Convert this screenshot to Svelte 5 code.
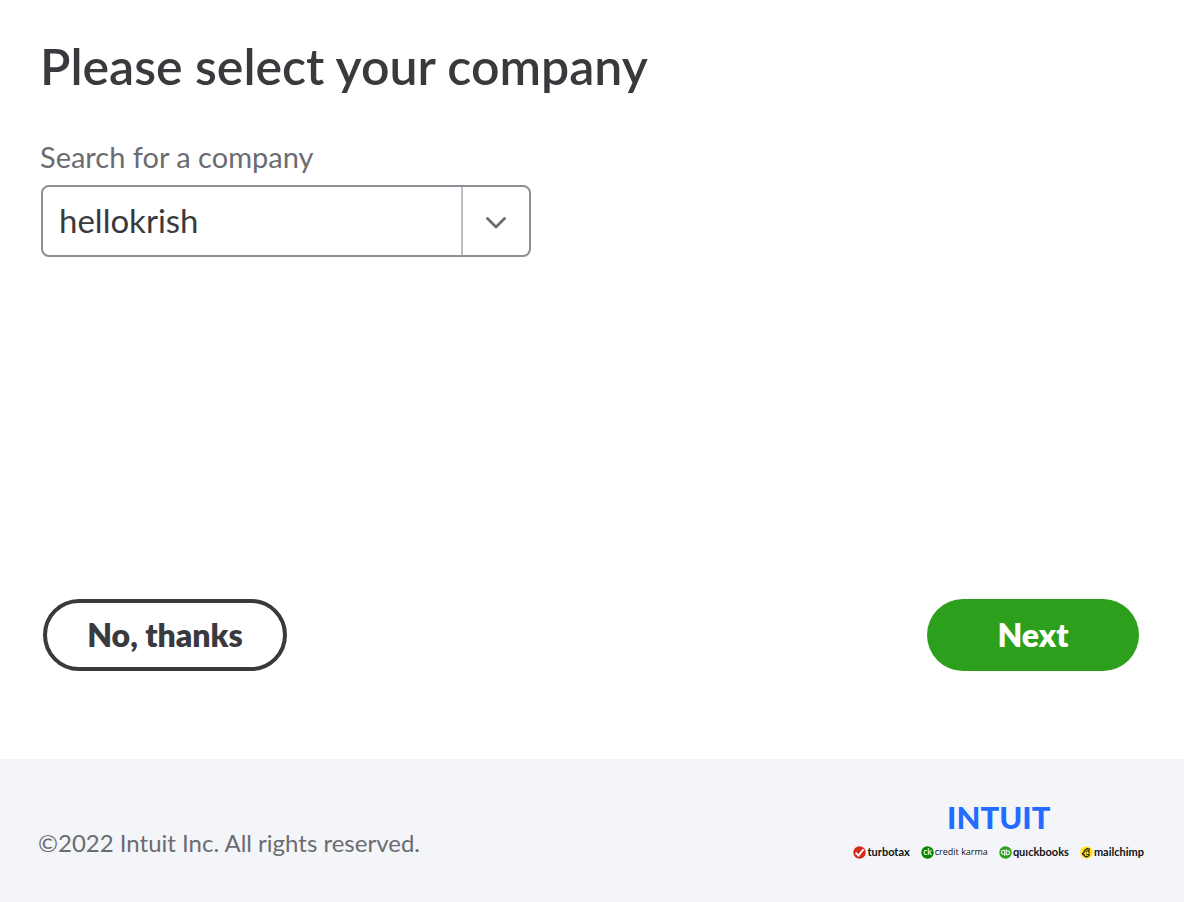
<script lang="ts">
  let company = "hellokrish";
  let open = false;

  const companies = ["hellokrish"];

  function pick(name: string) {
    company = name;
    open = false;
  }
</script>

<div class="page">
  <main>
    <h1>Please select your company</h1>

    <label for="company">Search for a company</label>
    <div class="combo">
      <input id="company" type="text" autocomplete="off" bind:value={company} />
      <button class="toggle" type="button" aria-label="Show companies" on:click={() => (open = !open)}>
        <svg width="20" height="12" viewBox="0 0 20 12" aria-hidden="true">
          <path d="M1.500 1.500 10 10l8.500-8.500" fill="none" stroke="#6b6c72" stroke-width="2.800" stroke-linecap="round" stroke-linejoin="round" />
        </svg>
      </button>
      {#if open}
        <ul class="options">
          {#each companies as name}
            <li><button type="button" on:click={() => pick(name)}>{name}</button></li>
          {/each}
        </ul>
      {/if}
    </div>

    <div class="actions">
      <button class="btn secondary" type="button">No, thanks</button>
      <button class="btn primary" type="button">Next</button>
    </div>
  </main>

  <footer>
    <p>©2022 Intuit Inc. All rights reserved.</p>

    <div class="brands">
      <div class="intuit">INTUIT</div>
      <div class="products">
        <span class="product">
          <svg width="13" height="13" viewBox="0 0 24 24" aria-hidden="true">
            <circle cx="12" cy="12" r="11.500" fill="#d52b1e" />
            <path d="M5 12.500l5 5L19.500 6" fill="none" stroke="#fff" stroke-width="3.500" />
          </svg>
          turbotax
        </span>
        <span class="product karma">
          <svg width="13" height="13" viewBox="0 0 24 24" aria-hidden="true">
            <circle cx="12" cy="12" r="11.500" fill="#008600" />
            <text x="12" y="17" text-anchor="middle" font-size="15" font-weight="600" fill="#fff">ck</text>
          </svg>
          credit karma
        </span>
        <span class="product">
          <svg width="13" height="13" viewBox="0 0 24 24" aria-hidden="true">
            <circle cx="12" cy="12" r="11.500" fill="#2ca01c" />
            <path d="M10.500 18V8H8a3.500 3.500 0 0 0 0 7h.8M13.500 6v10H16a3.500 3.500 0 0 0 0-7h-.8" fill="none" stroke="#fff" stroke-width="1.900" />
          </svg>
          quıckbooks
        </span>
        <span class="product">
          <svg width="13" height="13" viewBox="0 0 24 24" aria-hidden="true">
            <circle cx="12" cy="12" r="11.500" fill="#ffe01b" />
            <path d="M17 5.500C13 3.500 7.500 8 7 12.500c-3 0-3 4 .5 4 1 4.500 8.500 4.500 10-.5" fill="none" stroke="#241c15" stroke-width="2.400" />
            <path d="M17 5.500c1.500 1-1 2.500-1 4.500 0 1.500 1.500 2 1 3.500M10.500 11.500c1.500-2 3.500-3 5-2.500M11 14.500c2 1.500 4 1.500 6.500 1" fill="none" stroke="#241c15" stroke-width="2" />
          </svg>
          mailchimp
        </span>
      </div>
    </div>
  </footer>
</div>

<style>
  :global(body) {
    margin: 0;
    background: #fff;
  }

  .page {
    display: flex;
    flex-direction: column;
    min-height: 100vh;
    font-family: Lato, "Liberation Sans", sans-serif;
    color: #393a3d;
  }

  .page * {
    box-sizing: border-box;
  }

  main {
    flex: 1;
    display: flex;
    flex-direction: column;
    padding: 34px 40px 88px;
  }

  h1 {
    margin: 0 0 42px;
    font-size: 50px;
    line-height: 64px;
    font-weight: 600;
  }

  label {
    margin-bottom: 12px;
    font-size: 29px;
    line-height: 33px;
    color: #6b6c72;
  }

  /* Company picker */
  .combo {
    position: relative;
    display: flex;
    width: 100%;
    max-width: 490px;
    height: 72px;
    margin-left: 1px;
    border: 2px solid #8d9096;
    border-radius: 8px;
    background: #fff;
  }

  .combo input {
    flex: 1;
    min-width: 0;
    padding: 0 16px 2px;
    border: 0;
    outline: none;
    background: transparent;
    font: inherit;
    font-size: 33px;
    color: #393a3d;
  }

  .toggle {
    display: flex;
    align-items: center;
    justify-content: center;
    width: 68px;
    padding: 4px 0 0;
    border: 0;
    border-left: 2px solid #babec5;
    background: transparent;
    cursor: pointer;
  }

  .options {
    position: absolute;
    top: 100%;
    left: 0;
    right: 0;
    margin: 4px 0 0;
    padding: 8px 0;
    list-style: none;
    border: 2px solid #8d9096;
    border-radius: 8px;
    background: #fff;
  }

  .options button {
    width: 100%;
    padding: 8px 16px;
    border: 0;
    background: transparent;
    font: inherit;
    font-size: 29px;
    text-align: left;
  }

  /* Buttons */
  .actions {
    display: flex;
    justify-content: space-between;
    margin-top: auto;
    padding: 0 5px 0 3px;
  }

  .btn {
    height: 72px;
    padding: 0 32px 2px;
    border-radius: 36px;
    font: inherit;
    font-size: 32px;
    font-weight: 800;
    cursor: pointer;
  }

  .secondary {
    min-width: 244px;
    border: 4px solid #393a3d;
    background: #fff;
    color: #393a3d;
  }

  .primary {
    min-width: 212px;
    border: 0;
    background: #2ca01c;
    color: #fff;
  }

  footer {
    display: flex;
    justify-content: space-between;
    align-items: flex-start;
    min-height: 143px;
    padding: 40px 40px 32px 38px;
    background: #f4f5f8;
  }

  footer p {
    margin: 29px 0 0;
    font-size: 24px;
    line-height: 30px;
    color: #6b6c72;
  }

  .brands {
    display: flex;
    flex-direction: column;
    align-items: center;
  }

  .intuit {
    font-size: 31px;
    line-height: 36px;
    font-weight: 900;
    color: #236cff;
  }

  .products {
    display: flex;
    gap: 11px;
    margin-top: 9px;
  }

  .product {
    display: flex;
    align-items: center;
    gap: 1px;
    font-size: 11px;
    line-height: 16px;
    font-weight: 700;
    color: #111;
    white-space: nowrap;
  }

  .karma {
    font-family: "Open Sans", sans-serif;
    font-size: 9px;
    font-weight: 400;
  }
</style>
